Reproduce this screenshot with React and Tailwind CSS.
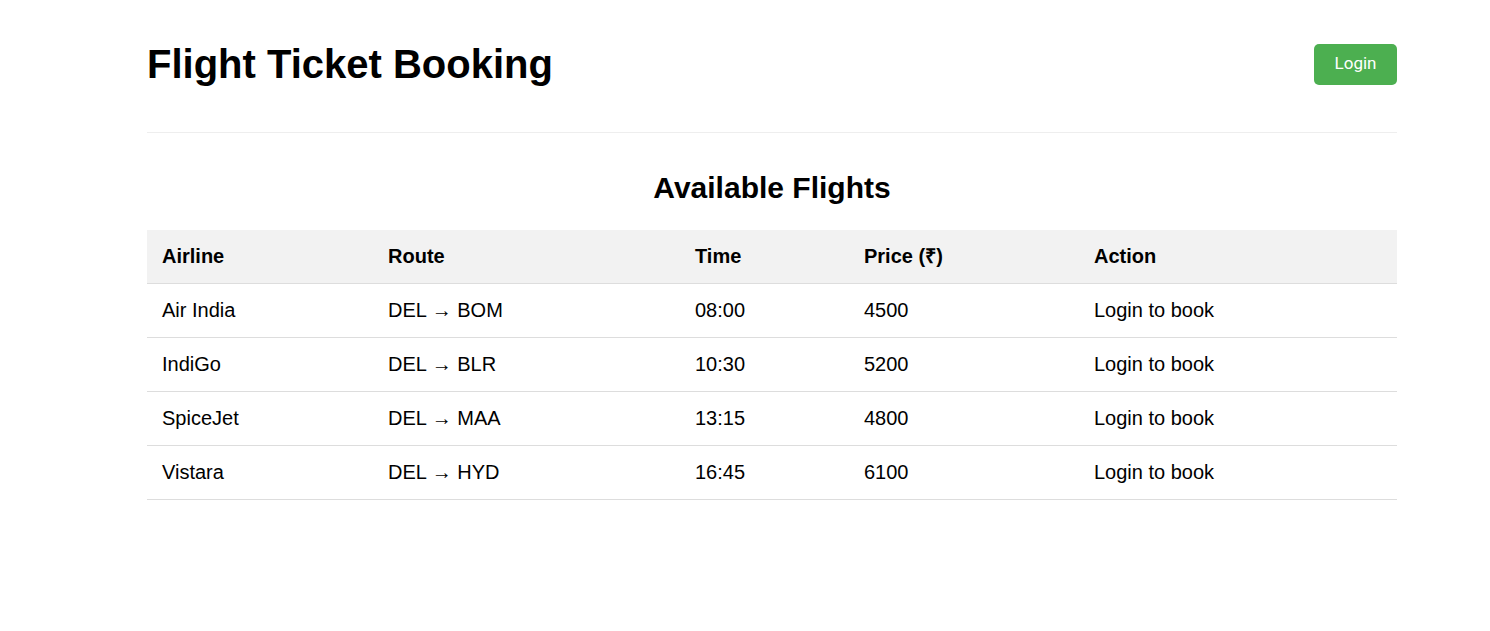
import React from "react";

const FLIGHTS = [
  { airline: "Air India", route: "DEL → BOM", time: "08:00", price: 4500 },
  { airline: "IndiGo", route: "DEL → BLR", time: "10:30", price: 5200 },
  { airline: "SpiceJet", route: "DEL → MAA", time: "13:15", price: 4800 },
  { airline: "Vistara", route: "DEL → HYD", time: "16:45", price: 6100 },
];

export default function App() {
  return (
    <div className="min-h-screen bg-white text-black font-['Liberation_Sans',Arial,sans-serif]">
      <div className="ml-[147px] w-[1250px]">
        {/* HEADER */}
        <header className="flex items-center justify-between pt-[41px] pb-[45px] border-b border-[#eeeeee]">
          <h1 className="text-[40px] leading-[46px] font-bold">Flight Ticket Booking</h1>
          <button className="h-[41px] w-[83px] bg-[#4CAF50] text-white rounded-[5px] text-[17px] font-['Roboto',sans-serif]">
            Login
          </button>
        </header>

        {/* FLIGHTS */}
        <section className="pt-[38px]">
          <h2 className="text-center text-[30px] leading-[34px] font-bold mb-[25px]">Available Flights</h2>

          <table className="w-full table-fixed border-collapse text-[20px] leading-[23px]">
            <thead>
              <tr className="bg-[#f2f2f2] border-b border-[#dddddd]">
                <th className="w-[226px] text-left font-bold px-[15px] py-[15px]">Airline</th>
                <th className="w-[307px] text-left font-bold px-[15px] py-[15px]">Route</th>
                <th className="w-[169px] text-left font-bold px-[15px] py-[15px]">Time</th>
                <th className="w-[230px] text-left font-bold px-[15px] py-[15px]">Price (₹)</th>
                <th className="text-left font-bold px-[15px] py-[15px]">Action</th>
              </tr>
            </thead>
            <tbody>
              {FLIGHTS.map((f) => (
                <tr key={f.airline} className="border-b border-[#dddddd]">
                  <td className="px-[15px] py-[15px]">{f.airline}</td>
                  <td className="px-[15px] py-[15px]">{f.route}</td>
                  <td className="px-[15px] py-[15px]">{f.time}</td>
                  <td className="px-[15px] py-[15px]">{f.price}</td>
                  <td className="px-[15px] py-[15px]">Login to book</td>
                </tr>
              ))}
            </tbody>
          </table>
        </section>
      </div>
    </div>
  );
}
